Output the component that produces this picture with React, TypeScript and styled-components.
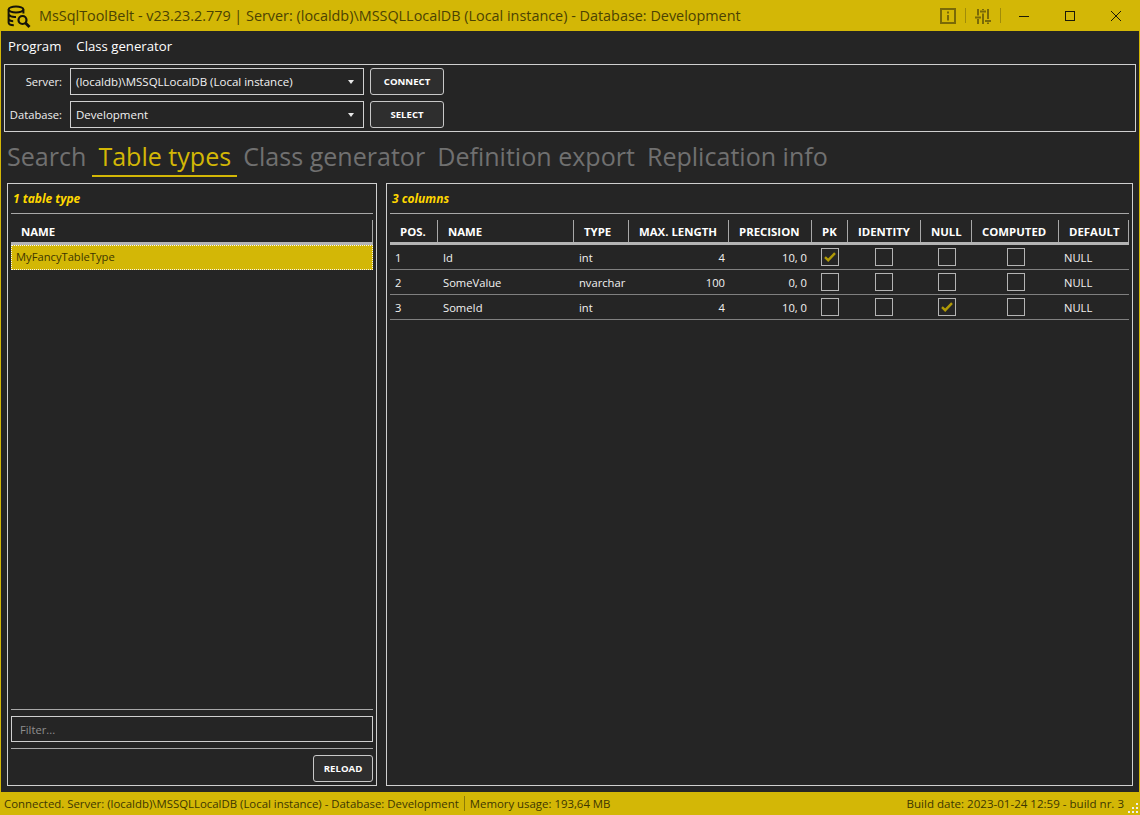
import React from "react";
import styled, { createGlobalStyle } from "styled-components";

const YELLOW = "#d3b706";
const BG = "#252525";
const UI_FONT = '"Open Sans", "Noto Sans", "Liberation Sans", sans-serif';

const Global = createGlobalStyle`
  html, body { margin: 0; padding: 0; background: ${BG}; overflow: hidden; }
  * { box-sizing: border-box; }
`;

const Window = styled.div`
  width: 1140px; height: 815px; display: flex; flex-direction: column;
  background: ${BG}; border-left: 1px solid ${YELLOW}; border-right: 1px solid ${YELLOW};
  font-family: ${UI_FONT}; color: #f2f2f2; font-size: 12px; overflow: hidden;
`;
const TitleBar = styled.header`
  height: 31px; margin: 0 -1px; padding-right: 1px; background: ${YELLOW}; display: flex; align-items: center; flex: none;
`;
const Logo = styled.svg`
  width: 24px; height: 24px; margin-left: 7px; margin-right: 8px; flex: none;
`;
const TitleText = styled.div`
  font-size: 14.4px; color: #4b4203; white-space: nowrap; flex: 1;
`;
const ToolIcon = styled.svg`
  width: 16px; height: 16px; flex: none;
`;
const TitleSep = styled.div`
  width: 1px; height: 15px; background: #a08c08; margin: 0 9px;
`;
const WinButtons = styled.div`
  display: flex; margin-left: -9px;
`;
const WinButton = styled.div`
  width: 46px; height: 31px; display: flex; align-items: center; justify-content: center;
`;
const MenuBar = styled.nav`
  height: 31px; flex: none; display: flex; align-items: center; padding: 0 0 2px 7px; gap: 15px; font-size: 13.2px; color: #fff;
`;
const ConnectionBox = styled.section`
  flex: none; margin: 2px 3px 0; height: 68px; border: 1px solid #d0d0d0; padding: 3px 0 0 0;
  display: grid; grid-template-columns: 59px 294px 74px; grid-auto-rows: 27px; row-gap: 6px; column-gap: 6px; align-content: start;
`;
const FieldLabel = styled.label`
  text-align: right; line-height: 27px; font-size: 11.2px; color: #efefef; white-space: nowrap; justify-self: end; padding-right: 2px;
`;
const Combo = styled.div`
  border: 1px solid #d0d0d0; display: flex; align-items: center; padding: 0 9px 0 5px; justify-content: space-between; font-size: 11.5px; color: #f2f2f2;
`;
const Caret = styled.span`
  width: 0; height: 0; border-left: 3.5px solid transparent; border-right: 3.5px solid transparent; border-top: 4px solid #e8e8e8; display: block;
`;
const Button = styled.button`
  background: #2e2e2e; border: 1px solid #c8c8c8; border-radius: 3px; color: #fff; font-family: ${UI_FONT}; font-size: 9.6px; font-weight: 700; padding: 0; height: 27px;
`;
const Tabs = styled.div`
  flex: none; display: flex; height: 45px; padding: 7px 0 0 0;
`;
const Tab = styled.div<{ $active?: boolean }>`
  font-size: 25.07px; line-height: 35px; height: 38px; padding: 0 6px; color: ${(p) => (p.$active ? YELLOW : "#707070")};
  border-bottom: 2px solid ${(p) => (p.$active ? YELLOW : "transparent")};
  white-space: nowrap;
`;
const Main = styled.main`
  flex: 1; min-height: 0; display: grid; grid-template-columns: 370px 747px; column-gap: 9px; padding: 6px;
`;
const Panel = styled.section`
  border: 1px solid #d0d0d0; padding: 0 3px 3px; display: flex; flex-direction: column; min-height: 0;
`;
const PanelTitle = styled.div`
  height: 30px; line-height: 29px; padding-left: 2px; color: #ffd700; font-weight: 700; font-style: italic; font-size: 12px; flex: none; border-bottom: 1px solid #a8a8a8;
`;
const GridHeader = styled.div<{ $cols: string }>`
  display: grid; grid-template-columns: ${(p) => p.$cols}; height: 31px; padding-top: 6px; border-bottom: 3px solid #b4b4b4; flex: none;
`;
const HeaderCell = styled.div`
  padding-left: 10px; font-weight: 700; font-size: 11.4px; line-height: 24px; height: 22px; border-right: 1px solid #a8a8a8; white-space: nowrap; color: #fff; overflow: hidden;
`;
const Row = styled.div<{ $cols: string }>`
  display: grid; grid-template-columns: ${(p) => p.$cols}; height: 25px; border-bottom: 1px solid #808080; align-items: center; flex: none;
`;
const Cell = styled.div<{ $align?: "left" | "right"; $pad?: number }>`
  font-size: 11.2px; text-align: ${(p) => p.$align ?? "left"}; padding-left: ${(p) => (p.$align === "right" ? 0 : p.$pad ?? 5)}px;
  padding-right: ${(p) => (p.$align === "right" ? p.$pad ?? 3 : 0)}px; color: #f2f2f2; white-space: nowrap;
`;
const CheckCell = styled.div<{ $dx?: number }>`
  display: flex; justify-content: center;
  padding-left: ${(p) => Math.max(p.$dx ?? 0, 0)}px; padding-right: ${(p) => Math.max(-(p.$dx ?? 0), 0)}px;
`;
const CheckBox = styled.div`
  width: 18px; height: 18px; border: 1px solid #b4b4b4; display: flex; align-items: center; justify-content: center;
`;
const SelectedRow = styled.div`
  height: 25px; flex: none; background: ${YELLOW}; outline: 1px dotted #f4f4f4; outline-offset: -1px; line-height: 24px; padding-left: 5px; font-size: 11.2px; color: #3d3602;
`;
const Spacer = styled.div`
  flex: 1; min-height: 0;
`;
const Divider = styled.div`
  height: 1px; background: #a8a8a8; flex: none;
`;
const FilterInput = styled.div`
  height: 26px; flex: none; margin: 6px 0; border: 1px solid #d0d0d0; padding-left: 8px; line-height: 25px; font-size: 11.2px; color: #8f8f8f;
`;
const ReloadRow = styled.div`
  flex: none; display: flex; justify-content: flex-end; padding-top: 6px;
`;
const ReloadButton = styled(Button)`
  width: 60px;
`;
const StatusBar = styled.footer`
  height: 23px; margin: 0 -1px; flex: none; background: ${YELLOW}; display: flex; align-items: center; padding: 0 16px 0 4px; font-size: 11.4px; color: #3d3602; white-space: nowrap; position: relative;
`;
const StatusSep = styled.div`
  width: 1px; height: 15px; background: #8c7a05; margin: 0 5px;
`;
const StatusRight = styled.div`
  margin-left: auto; font-size: 11.55px;
`;
const Grip = styled.svg`
  position: absolute; right: 1px; bottom: 1px; width: 11px; height: 11px;
`;

const COLS = "48px 136px 55px 100px 83px 36px 73px 51px 87px 70px";
const HEADERS = ["POS.", "NAME", "TYPE", "MAX. LENGTH", "PRECISION", "PK", "IDENTITY", "NULL", "COMPUTED", "DEFAULT"];
const ROWS = [
  { pos: 1, name: "Id", type: "int", len: 4, prec: "10, 0", pk: true, nul: false },
  { pos: 2, name: "SomeValue", type: "nvarchar", len: 100, prec: "0, 0", pk: false, nul: false },
  { pos: 3, name: "SomeId", type: "int", len: 4, prec: "10, 0", pk: false, nul: true },
];

function Check({ on, dx }: { on?: boolean; dx?: number }) {
  return (
    <CheckCell $dx={dx}>
      <CheckBox>
        {on && (
          <svg width="12" height="10" viewBox="0 0 12 10">
            <path d="M1 5.2 L4.2 8.2 L11 1.2" fill="none" stroke="#b09a06" strokeWidth="2.4" />
          </svg>
        )}
      </CheckBox>
    </CheckCell>
  );
}

export default function App() {
  return (
    <Window>
      <Global />
      <TitleBar>
        <Logo viewBox="0 0 24 24" fill="none" stroke="#14130a" strokeWidth="2">
          <ellipse cx="9" cy="5.5" rx="7.4" ry="3" />
          <path d="M1.6 5.5 V18.5 C1.6 20.6 4 21.2 6.8 21.2 M16.4 5.5 V9.5 M1.6 10.5 C3 12.5 6 13.2 9 13 M1.6 15.5 C2.8 16.8 4.5 17.2 6.2 17.2" />
          <circle cx="15.5" cy="16" r="4" strokeWidth="2.2" />
          <path d="M18.5 19 L22.5 23" strokeWidth="2.8" />
        </Logo>
        <TitleText>MsSqlToolBelt - v23.23.2.779 | Server: (localdb)\MSSQLLocalDB (Local instance) - Database: Development</TitleText>
        <ToolIcon viewBox="0 0 16 16" fill="none" stroke="#7a6a07" strokeWidth="2">
          <rect x="1" y="1" width="14" height="14" />
          <path d="M8 3.5 V5.5 M8 7 V12.5" />
        </ToolIcon>
        <TitleSep />
        <ToolIcon viewBox="0 0 16 16" fill="none" stroke="#7a6a07" strokeWidth="2">
          <path d="M3 1 V7.5 M3 11 V16 M8 1 V2 M8 5.5 V16 M13 1 V11 M13 14.5 V16 M0 9.5 H6 M5 3.5 H11 M10 13 H16" />
        </ToolIcon>
        <TitleSep />
        <WinButtons>
          <WinButton>
            <svg width="10" height="10" viewBox="0 0 10 10"><path d="M0 5.5 H10" stroke="#1c1a08" strokeWidth="1" /></svg>
          </WinButton>
          <WinButton>
            <svg width="10" height="10" viewBox="0 0 10 10"><rect x="0.5" y="0.5" width="9" height="9" fill="none" stroke="#1c1a08" /></svg>
          </WinButton>
          <WinButton>
            <svg width="10" height="10" viewBox="0 0 10 10"><path d="M0 0 L10 10 M10 0 L0 10" stroke="#1c1a08" strokeWidth="1" /></svg>
          </WinButton>
        </WinButtons>
      </TitleBar>

      <MenuBar>
        <span>Program</span>
        <span>Class generator</span>
      </MenuBar>

      <ConnectionBox>
        <FieldLabel>Server:</FieldLabel>
        <Combo>(localdb)\MSSQLLocalDB (Local instance)<Caret /></Combo>
        <Button>CONNECT</Button>
        <FieldLabel>Database:</FieldLabel>
        <Combo>Development<Caret /></Combo>
        <Button>SELECT</Button>
      </ConnectionBox>

      <Tabs>
        <Tab>Search</Tab>
        <Tab $active>Table types</Tab>
        <Tab>Class generator</Tab>
        <Tab>Definition export</Tab>
        <Tab>Replication info</Tab>
      </Tabs>

      <Main>
        <Panel>
          <PanelTitle>1 table type</PanelTitle>
          <GridHeader $cols="1fr">
            <HeaderCell>NAME</HeaderCell>
          </GridHeader>
          <SelectedRow>MyFancyTableType</SelectedRow>
          <Spacer />
          <Divider />
          <FilterInput>Filter...</FilterInput>
          <Divider />
          <ReloadRow>
            <ReloadButton>RELOAD</ReloadButton>
          </ReloadRow>
        </Panel>
        <Panel>
          <PanelTitle>3 columns</PanelTitle>
          <GridHeader $cols={COLS}>
            {HEADERS.map((h) => (
              <HeaderCell key={h}>{h}</HeaderCell>
            ))}
          </GridHeader>
          {ROWS.map((r) => (
            <Row key={r.pos} $cols={COLS}>
              <Cell $pad={5}>{r.pos}</Cell>
              <Cell>{r.name}</Cell>
              <Cell>{r.type}</Cell>
              <Cell $align="right" $pad={4}>{r.len}</Cell>
              <Cell $align="right" $pad={5}>{r.prec}</Cell>
              <Check on={r.pk} />
              <Check dx={-1} />
              <Check on={r.nul} dx={1} />
              <Check dx={1} />
              <Cell>NULL</Cell>
            </Row>
          ))}
          <Spacer />
        </Panel>
      </Main>

      <StatusBar>
        <span>Connected. Server: (localdb)\MSSQLLocalDB (Local instance) - Database: Development</span>
        <StatusSep />
        <span>Memory usage: 193,64 MB</span>
        <StatusRight>Build date: 2023-01-24 12:59 - build nr. 3</StatusRight>
        <Grip viewBox="0 0 11 11" fill="#eee">
          <rect x="8" y="0" width="2" height="2" />
          <rect x="4" y="4" width="2" height="2" />
          <rect x="8" y="4" width="2" height="2" />
          <rect x="0" y="8" width="2" height="2" />
          <rect x="4" y="8" width="2" height="2" />
          <rect x="8" y="8" width="2" height="2" />
        </Grip>
      </StatusBar>
    </Window>
  );
}
